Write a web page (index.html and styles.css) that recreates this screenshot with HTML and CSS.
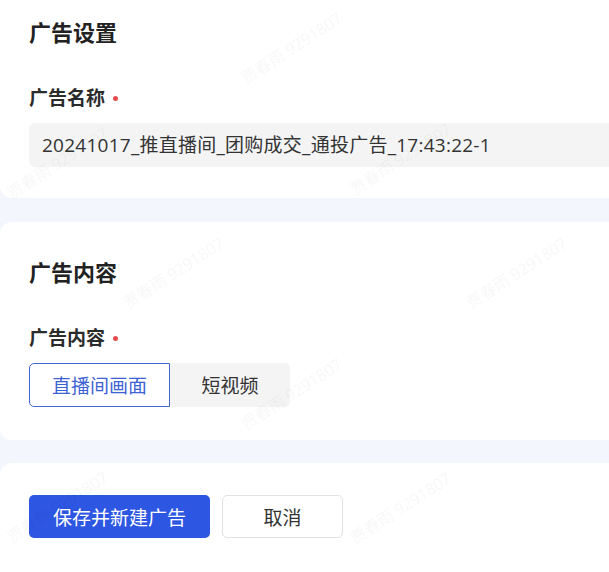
FILE: index.html
```html
<!DOCTYPE html>
<html lang="zh-CN">
<head>
    <meta charset="UTF-8">
    <meta name="viewport" content="width=device-width, initial-scale=1.0">
    <title>广告设置</title>
    <link rel="stylesheet" href="styles.css">
</head>
<body>
    <div class="page">
        <!-- 广告设置 -->
        <section class="card card-settings">
            <h2 class="card-title">广告设置</h2>
            <div class="field">
                <label class="field-label">广告名称<span class="required"></span></label>
                <div class="text-input">20241017_推直播间_团购成交_通投广告_17:43:22-1</div>
            </div>
        </section>

        <!-- 广告内容 -->
        <section class="card card-content">
            <h2 class="card-title">广告内容</h2>
            <div class="field">
                <label class="field-label">广告内容<span class="required"></span></label>
                <div class="segmented">
                    <button class="segment active">直播间画面</button>
                    <button class="segment">短视频</button>
                </div>
            </div>
        </section>

        <!-- 底部操作 -->
        <section class="card card-actions">
            <div class="actions">
                <button class="btn btn-primary">保存并新建广告</button>
                <button class="btn btn-default">取消</button>
            </div>
        </section>
    </div>

    <div class="watermarks">
        <span class="wm wm-1">贾春雨 9291807</span>
        <span class="wm wm-2">贾春雨 9291807</span>
        <span class="wm wm-3">贾春雨 9291807</span>
        <span class="wm wm-4">贾春雨 9291807</span>
        <span class="wm wm-5">贾春雨 9291807</span>
        <span class="wm wm-6">贾春雨 9291807</span>
        <span class="wm wm-7">贾春雨 9291807</span>
        <span class="wm wm-8">贾春雨 9291807</span>
    </div>
</body>
</html>
```

FILE: styles.css
```css
/* 页面基础 */
body {
    margin: 0;
    background-color: #f3f6fc;
    font-family: "Open Sans", "Noto Sans CJK SC", sans-serif;
    color: #333;
    overflow: hidden;
}

.page {
    margin-top: -18px;
}

/* 卡片右侧超出视口，只保留左侧圆角 */
.card {
    background-color: #fff;
    border-radius: 12px 0 0 12px;
    padding: 35px 0 31px 29px;
    margin-bottom: 24px;
}

.card-content {
    padding-bottom: 33px;
    margin-bottom: 23px;
}

.card-actions {
    padding-top: 32px;
    padding-bottom: 0;
    margin-bottom: 0;
    height: 77px;
    border-radius: 12px 0 0 0;
}

.card-title {
    margin: 0 0 39px;
    font-size: 22px;
    line-height: 30px;
    font-weight: 700;
    color: #222;
}

.field-label {
    display: flex;
    align-items: center;
    font-size: 19px;
    line-height: 24px;
    font-weight: 700;
    color: #2b2b2b;
    margin-bottom: 13px;
}

.required {
    width: 5px;
    height: 5px;
    border-radius: 50%;
    background-color: #e34d4d;
    margin-left: 8px;
}

.text-input {
    height: 44px;
    line-height: 44px;
    padding-left: 13px;
    background-color: #f4f4f5;
    border-radius: 6px 0 0 6px;
    font-size: 19px;
    letter-spacing: 0.25px;
    color: #333;
    white-space: nowrap;
}

/* 分段选择 */
.segmented {
    display: flex;
}

.segment {
    height: 44px;
    border: none;
    background-color: #f4f4f5;
    font-family: inherit;
    font-size: 19px;
    color: #333;
    padding: 0;
    cursor: pointer;
}

.segment:first-child {
    width: 141px;
    border-radius: 5px 0 0 5px;
}

.segment:last-child {
    width: 120px;
    border-radius: 0 5px 5px 0;
}

.segment.active {
    background-color: #fff;
    border: 1px solid #4468d2;
    color: #3d62d3;
}

/* 按钮 */
.actions {
    display: flex;
    gap: 12px;
}

.btn {
    height: 43px;
    border-radius: 5px;
    font-family: inherit;
    font-size: 19px;
    padding: 0;
    cursor: pointer;
}

.btn-primary {
    width: 181px;
    border: none;
    background-color: #2d56e2;
    color: #fff;
}

.btn-default {
    width: 121px;
    border: 1px solid #e2e2e2;
    background-color: #fff;
    color: #333;
}

/* 水印 */
.watermarks {
    position: fixed;
    inset: 0;
    pointer-events: none;
}

.wm {
    position: absolute;
    transform: translate(-50%, -50%) rotate(-33deg);
    font-size: 16px;
    color: rgba(0, 0, 0, 0.035);
    white-space: nowrap;
}

.wm-1 { left: 291px; top: 47px; }
.wm-2 { left: 57px; top: 162px; }
.wm-3 { left: 400px; top: 158px; }
.wm-4 { left: 173px; top: 272px; }
.wm-5 { left: 516px; top: 272px; }
.wm-6 { left: 291px; top: 393px; }
.wm-7 { left: 57px; top: 506px; }
.wm-8 { left: 400px; top: 507px; }
```
